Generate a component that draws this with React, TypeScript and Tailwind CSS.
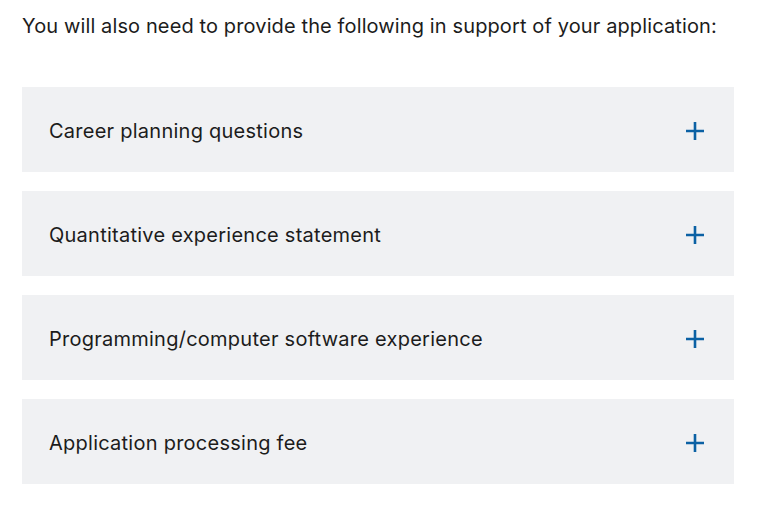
const items = [
  "Career planning questions",
  "Quantitative experience statement",
  "Programming/computer software experience",
  "Application processing fee",
];

function PlusIcon() {
  return (
    <svg width="18" height="18" viewBox="0 0 18 18" aria-hidden="true">
      <path d="M9 0v18M0 9h18" stroke="#0b61a4" strokeWidth="2.6" />
    </svg>
  );
}

export default function App() {
  return (
    <main className="min-h-screen bg-white px-[22px] pt-[12px] font-['Inter',sans-serif] text-[#1c1c1c]">
      <p className="text-[20px] leading-[28px] tracking-[0.12px]">
        You will also need to provide the following in support of your application:
      </p>
      <ul className="mt-[47px] flex w-[712px] flex-col gap-[19px]">
        {items.map((item) => (
          <li key={item}>
            <button className="flex h-[85px] w-full items-center justify-between bg-[#f0f1f3] pl-[27px] pr-[30px] pt-[2px] text-left text-[20px] tracking-[0.25px]">
              <span>{item}</span>
              <PlusIcon />
            </button>
          </li>
        ))}
      </ul>
    </main>
  );
}
